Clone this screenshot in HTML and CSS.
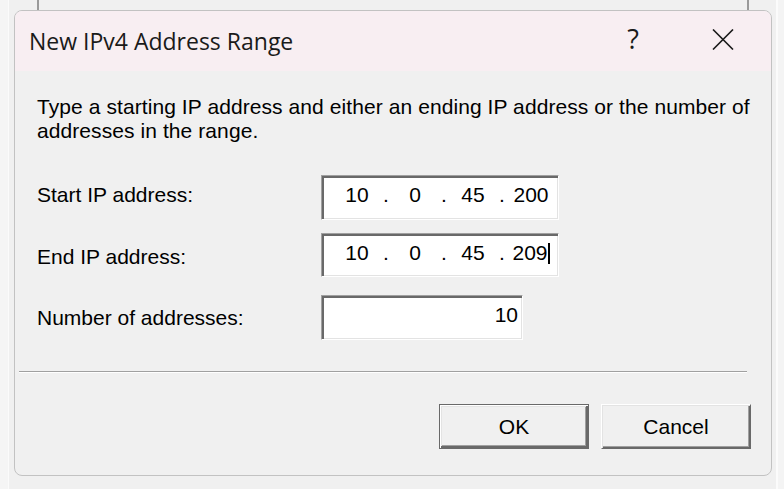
FILE: index.html
```html
<!DOCTYPE html>
<html lang="en">
<head>
<meta charset="utf-8">
<title>New IPv4 Address Range</title>
<link rel="stylesheet" href="styles.css">
</head>
<body>
<div class="dialog">
  <div class="titlebar">
    <span class="title">New IPv4 Address Range</span>
    <span class="help">?</span>
    <span class="close">
      <svg width="22" height="21" viewBox="0 0 22 21"><path d="M1 0.5 L21 20.5 M21 0.5 L1 20.5" stroke="#1a1a1a" stroke-width="1.6" fill="none"/></svg>
    </span>
  </div>
  <div class="content">
    <p class="intro">Type a starting IP address and either an ending IP address or the number of<br>addresses in the range.</p>
    <div class="rows">
      <div class="row row-start">
        <span class="label">Start IP address:</span>
        <div class="field ip">
          <span class="octet">10</span><span class="dot">.</span><span class="octet">0</span><span class="dot">.</span><span class="octet">45</span><span class="dot">.</span><span class="octet">200</span>
        </div>
      </div>
      <div class="row row-end">
        <span class="label">End IP address:</span>
        <div class="field ip">
          <span class="octet">10</span><span class="dot">.</span><span class="octet">0</span><span class="dot">.</span><span class="octet">45</span><span class="dot">.</span><span class="octet">209<span class="caret"></span></span>
        </div>
      </div>
      <div class="row row-number">
        <span class="label">Number of addresses:</span>
        <div class="field num">10</div>
      </div>
    </div>
  </div>
  <div class="separator"></div>
  <div class="buttons">
    <button class="btn btn-default">OK</button>
    <button class="btn">Cancel</button>
  </div>
</div>
</body>
</html>
```
FILE: styles.css
```css
html, body {
  margin: 0;
  padding: 0;
}
body {
  width: 784px;
  height: 489px;
  overflow: hidden;
  font-family: "Liberation Sans", Arial, sans-serif;
  color: #000;
  background:
    linear-gradient(#9a9a9a, #9a9a9a) 37px 0 / 2px 10px no-repeat,
    linear-gradient(#9a9a9a, #9a9a9a) 747px 0 / 2px 10px no-repeat,
    linear-gradient(to right, #f5f5f5 0 8px, #fbfbfb 8px 9px, #f0f0f0 9px 776px, #fbfbfb 776px 778px, #f4f4f4 778px);
  padding-top: 10px;
  box-sizing: border-box;
}
.dialog {
  margin-left: 14px;
  width: 758px;
  height: 466px;
  box-sizing: border-box;
  border: 1px solid #c2c2c2;
  border-radius: 8px;
  background: #f0f0f0;
  overflow: hidden;
  display: flex;
  flex-direction: column;
}
.titlebar {
  height: 60px;
  flex: none;
  background: #f8eef2;
  display: flex;
  align-items: center;
  padding-left: 14px;
  padding-right: 28px;
}
.title {
  flex: 1;
  font-family: "Open Sans", "Noto Sans", sans-serif;
  font-size: 23px;
  line-height: 30px;
  color: #1a1a1a;
}
.help {
  width: 40px;
  text-align: center;
  font-family: "Open Sans", "Noto Sans", sans-serif;
  font-size: 27px;
  line-height: 30px;
  color: #1a1a1a;
  margin-bottom: 4px;
}
.close {
  width: 40px;
  margin-left: 50px;
  margin-bottom: 4px;
  display: flex;
  justify-content: center;
}
.close svg {
  display: block;
}
.content {
  padding: 24px 0 0 22px;
}
.intro {
  margin: 0;
  font-size: 21px;
  line-height: 24px;
  letter-spacing: 0.08px;
  white-space: nowrap;
}
.rows {
  margin-top: 32px;
  display: flex;
  flex-direction: column;
  gap: 13px;
}
.row {
  display: flex;
  align-items: flex-start;
}
.row-number {
  margin-top: 5px;
}
.label {
  width: 284px;
  flex: none;
  font-size: 21px;
  line-height: 24px;
  padding-top: 8px;
}
.row-end .label {
  padding-top: 12px;
}
.row-number .label {
  padding-top: 11px;
}
.field {
  box-sizing: border-box;
  height: 45px;
  background: #fff;
  border: 1px solid;
  border-color: #a0a0a0 #ffffff #ffffff #a0a0a0;
  box-shadow: inset 2px 2px 0 #696969, inset -1px -1px 0 #e3e3e3;
  font-size: 21px;
  line-height: 24px;
  display: flex;
  align-items: flex-start;
  padding-top: 7px;
}
.row-end .field {
  height: 44px;
}
.ip {
  width: 238px;
  padding-left: 11px;
}
.octet {
  width: 48px;
  text-align: center;
  white-space: nowrap;
}
.dot {
  width: 10px;
  text-align: center;
}
.caret {
  display: inline-block;
  width: 2px;
  height: 21px;
  background: #000;
  vertical-align: -4px;
}
.num {
  width: 202px;
  justify-content: flex-end;
  padding-right: 4px;
}
.separator {
  margin: 31px 24px 0 4px;
  height: 1px;
  background: #a0a0a0;
  border-bottom: 1px solid #ffffff;
  flex: none;
}
.buttons {
  margin-top: 31px;
  display: flex;
  justify-content: flex-end;
  gap: 12px;
  padding-right: 20px;
}
.btn {
  width: 150px;
  height: 45px;
  box-sizing: border-box;
  margin: 0;
  padding: 0;
  background: #f0f0f0;
  font-family: "Liberation Sans", Arial, sans-serif;
  font-size: 21px;
  color: #000;
  border: 1px solid;
  border-color: #ffffff #696969 #696969 #ffffff;
  box-shadow: inset 1px 1px 0 #e3e3e3, inset -1px -1px 0 #696969, inset -2px -2px 0 #a0a0a0;
}
.btn-default {
  border-color: #696969;
  box-shadow: inset 1px 1px 0 #ffffff, inset -2px -2px 0 #696969, inset 2px 2px 0 #e3e3e3, inset -3px -3px 0 #a0a0a0;
}
```
